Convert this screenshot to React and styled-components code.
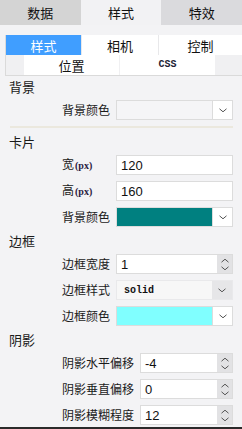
import styled, { createGlobalStyle } from 'styled-components';
import { useState } from 'react';

const GlobalStyle = createGlobalStyle`
  html, body { margin: 0; padding: 0; }
  body {
    background: #f3f3f5;
    font-family: "Noto Sans CJK SC", "Noto Sans", sans-serif;
    color: #1a1a1a;
  }
  * { box-sizing: border-box; }
`;

const mainTabs = [
    { text: "数据", bg: "#d4d4d4" },
    { text: "样式", bg: "#f2f2f4" },
    { text: "特效", bg: "#dadadd" },
]

const sections = [
    {
        title: "背景",
        rows: [{ label: "背景颜色", type: "select" }],
        divider: true,
    },
    {
        title: "卡片",
        rows: [
            { label: "宽", unit: "(px)", type: "text", value: "120" },
            { label: "高", unit: "(px)", type: "text", value: "160" },
            { label: "背景颜色", type: "color", value: "#008080" },
        ],
    },
    {
        title: "边框",
        rows: [
            { label: "边框宽度", type: "number", value: "1" },
            { label: "边框样式", type: "plain", value: "solid" },
            { label: "边框颜色", type: "color", value: "#80ffff" },
        ],
    },
    {
        title: "阴影",
        rows: [
            { label: "阴影水平偏移", type: "number", value: "-4" },
            { label: "阴影垂直偏移", type: "number", value: "0" },
            { label: "阴影模糊程度", type: "number", value: "12" },
        ],
    },
]

function ChevronDown() {
    return (
        <svg width="8" height="5" viewBox="0 0 8 5">
            <polyline points="0.5,0.8 4,3.8 7.5,0.8" fill="none" stroke="#555" strokeWidth="1" />
        </svg>
    )
}

function ChevronUp() {
    return (
        <svg width="8" height="5" viewBox="0 0 8 5">
            <polyline points="0.5,4.2 4,1.2 7.5,4.2" fill="none" stroke="#555" strokeWidth="1" />
        </svg>
    )
}

function Field({ row }) {
    if (row.type === "number") {
        return (
            <Box>
                <Value>{row.value}</Value>
                <Spinner><ChevronUp /><ChevronDown /></Spinner>
            </Box>
        )
    }
    if (row.type === "text") {
        return (
            <Box>
                <Value>{row.value}</Value>
            </Box>
        )
    }
    if (row.type === "plain") {
        return (
            <Box $plain>
                <Value $mono>{row.value}</Value>
                <Arrow $plain><ChevronDown /></Arrow>
            </Box>
        )
    }
    return (
        <Box $empty={row.type === "select"}>
            <Swatch style={{ background: row.value }} />
            <Arrow><ChevronDown /></Arrow>
        </Box>
    )
}

function App() {
    const [aba, setAba] = useState(1);
    const [subAba, setSubAba] = useState(0);
    const subTabs = ["样式", "相机", "控制"];
    const subTabs2 = ["位置", "CSS"];

    return (
        <>
            <GlobalStyle />
            <Page>
                <MainTabs>
                    {mainTabs.map((t, i) =>
                        <MainTab key={t.text} $bg={i === aba ? "#f2f2f4" : t.bg} onClick={() => setAba(i)}>{t.text}</MainTab>
                    )}
                </MainTabs>
                <SubTabs>
                    <SubRow>
                        {subTabs.map((t, i) =>
                            <SubTab key={t} $active={subAba === i} onClick={() => setSubAba(i)}>{t}</SubTab>
                        )}
                    </SubRow>
                    <SubRow2>
                        {subTabs2.map((t, i) =>
                            <SubTab key={t} $wide $active={subAba === i + 3} onClick={() => setSubAba(i + 3)}>
                                {t === "CSS" ? <CssText>CSS</CssText> : t}
                            </SubTab>
                        )}
                    </SubRow2>
                </SubTabs>
                <Panel>
                    {sections.map((s) =>
                        <Section key={s.title}>
                            <Title>{s.title}</Title>
                            {s.rows.map((r) =>
                                <Row key={r.label}>
                                    <Label>
                                        {r.label}
                                        {r.unit && <Unit>{r.unit}</Unit>}
                                    </Label>
                                    <Field row={r} />
                                </Row>
                            )}
                            {s.divider && <Divider />}
                        </Section>
                    )}
                    <Spacer />
                </Panel>
            </Page>
        </>
    )
}
export default App;

const Page = styled.div`
    width: 242px;
    height: 429px;
    display: flex;
    flex-direction: column;
    background: #f3f3f5;
    overflow: hidden;
`;
const MainTabs = styled.div`
    display: flex;
    height: 25px;
`;
const MainTab = styled.div`
    flex: 1;
    display: flex;
    align-items: center;
    justify-content: center;
    background: ${p => p.$bg};
    font-size: 13px;
    color: #111;
    cursor: pointer;
`;
const SubTabs = styled.div`
    margin: 10px 0 0 5px;
    border-left: 1px solid #dadada;
    border-bottom: 1px solid #dadada;
    background: #f0f0f2;
`;
const SubRow = styled.div`
    display: grid;
    grid-template-columns: 75px 76px 1fr;
    gap: 1px;
    height: 20px;
    background: #e8e8ea;
`;
const SubRow2 = styled.div`
    display: flex;
    gap: 1px;
    height: 20px;
    padding-left: 18px;
`;
const SubTab = styled.div`
    width: ${p => p.$wide ? "95px" : "auto"};
    display: flex;
    align-items: center;
    justify-content: center;
    background: ${p => p.$active ? "#409eff" : "#ffffff"};
    color: ${p => p.$active ? "#ffffff" : "#111"};
    font-size: 13px;
    cursor: pointer;
`;
const CssText = styled.span`
    font-family: "Liberation Mono", monospace;
    font-size: 10px;
    font-weight: bold;
    line-height: 20px;
    color: #223;
`;
const Panel = styled.div`
    flex: 1;
    overflow-y: scroll;
    padding-top: 3px;
    border-bottom: 2px solid #2a2a2a;

    &::-webkit-scrollbar { width: 6px; }
    &::-webkit-scrollbar-track { background: #f3f3f5; margin-top: 5px; }
    &::-webkit-scrollbar-thumb { background: #e3e3e5; border-radius: 3px; }
`;
const Section = styled.div`
    display: flex;
    flex-direction: column;
`;
const Title = styled.div`
    height: 16px;
    line-height: 16px;
    margin: 0 0 5px 9px;
    font-size: 13px;
    color: #1a1a1a;
    ${Section} + ${Section} & { margin-top: 6px; }
`;
const Row = styled.div`
    display: flex;
    align-items: center;
    height: 20px;
    padding: 0 9px 0 62px;
    & + & { margin-top: 6px; }
`;
const Label = styled.div`
    min-width: 48px;
    margin-right: 6px;
    font-size: 12px;
    line-height: 16px;
    white-space: nowrap;
    color: #1a1a1a;
`;
const Unit = styled.span`
    font-family: "Liberation Serif", serif;
    font-size: 10px;
    font-weight: bold;
    color: #2a2040;
    margin-left: 1px;
`;
const Box = styled.div`
    flex: 1;
    height: 20px;
    display: flex;
    border: 1px solid ${p => p.$plain ? "#e9e9eb" : "#dcdcdc"};
    background: ${p => p.$plain ? "#f7f7f7" : p.$empty ? "#f5f5f7" : "#ffffff"};
`;
const Value = styled.div`
    flex: 1;
    display: flex;
    align-items: center;
    padding-left: ${p => p.$mono ? "7px" : "4px"};
    font-family: ${p => p.$mono ? '"Liberation Mono", monospace' : '"Liberation Sans", Arial, sans-serif'};
    font-size: ${p => p.$mono ? "10px" : "13px"};
    font-weight: ${p => p.$mono ? "bold" : "normal"};
    color: #111;
`;
const Spinner = styled.div`
    width: 15px;
    display: flex;
    flex-direction: column;
    align-items: center;
    justify-content: center;
    gap: 3px;
    background: #e2e2e4;
`;
const Swatch = styled.div`
    flex: 1;
`;
const Arrow = styled.div`
    width: 20px;
    display: flex;
    align-items: center;
    justify-content: center;
    background: ${p => p.$plain ? "#e6e6e8" : "#ffffff"};
    border-left: ${p => p.$plain ? "none" : "1px solid #dcdcdc"};
`;
const Divider = styled.div`
    height: 2px;
    margin: 6px 9px 0 10px;
    background: #ebe8de;
`;
const Spacer = styled.div`
    height: 610px;
`;
